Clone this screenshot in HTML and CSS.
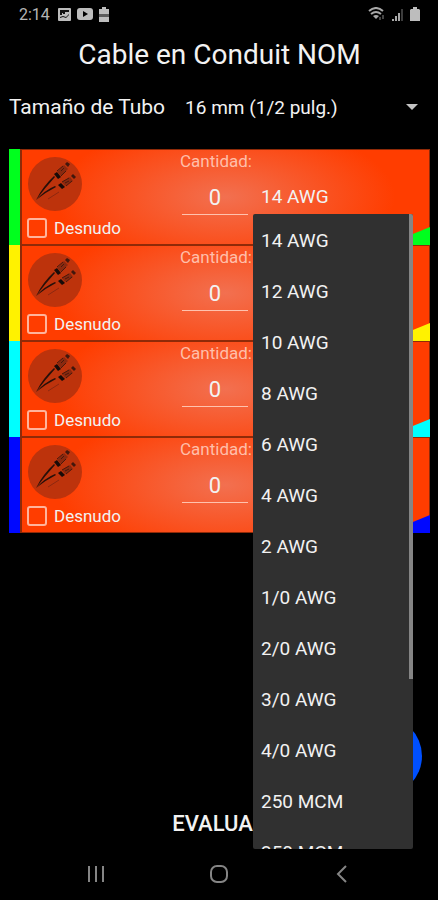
FILE: index.html
```
<!DOCTYPE html>
<html lang="es">
<head>
  <meta charset="UTF-8">
  <meta name="viewport" content="width=device-width, initial-scale=1.0">
  <title>Cable en Conduit NOM</title>
  <link rel="stylesheet" href="styles.css">
</head>
<body>
  <svg class="symbols" aria-hidden="true">
    <symbol id="cable" viewBox="0 0 54 54">
      <circle cx="27" cy="27" r="27" fill="#bd330c"/>
      <path d="M8 43 Q15 29 26 19 L27 20 Q17 31 8 43Z" fill="#28100a"/>
      <path d="M8 43 Q17 33 27 29 L28 30 Q18 35 8 43Z" fill="#28100a"/>
      <path d="M20 42 L31 35" stroke="#8d2810" stroke-width="1"/>
      <path d="M26 17 L29 15 L33 20 L30 22Z" fill="#180b08"/>
      <path d="M29 15 L36 8 L40 12 L33 19Z" fill="#8a290f"/>
      <path d="M29 14 L35 9 M33 19 L38 14 M33 14 L36 11" stroke="#48190c" stroke-width="1"/>
      <path d="M37 7 L39 5 L42 7 L40 10Z" fill="#42170c"/>
      <path d="M30 28 L33 26 L37 30 L34 32Z" fill="#180b08"/>
      <path d="M34 25 L42 20 L45 24 L37 29Z" fill="#8a290f"/>
      <path d="M34 25 L41 21 M38 29 L44 24 M37 26 L41 24" stroke="#48190c" stroke-width="1"/>
      <path d="M43 19 L45 17 L48 20 L46 22Z" fill="#42170c"/>
    </symbol>
  </svg>

  <div class="status-bar">
    <span class="clock">2:14</span>
    <svg width="13" height="13" viewBox="0 0 13 13"><rect width="13" height="13" rx="1" fill="#bdbdbd"/><path d="M2 2h9v2H7v2H5V5H4v2H2zM2 9l3-1 3 1 3-3v1L8 10 5 9l-3 1z" fill="#111"/></svg>
    <svg width="16" height="12" viewBox="0 0 16 12"><rect width="16" height="12" rx="3" fill="#bdbdbd"/><path d="M6 3l5 3-5 3z" fill="#000"/></svg>
    <svg width="10" height="15" viewBox="0 0 10 15"><path d="M3 0h4v2h3v13H0V2h3z" fill="#bdbdbd"/><path d="M0 7h10v3H0z" fill="#5c5c5c"/></svg>
    <span class="spacer"></span>
    <svg width="18" height="14" viewBox="0 0 18 14"><g fill="none" stroke="#a8a8a8" stroke-width="2"><path d="M1 4q7-6 14 0M3 7q5-4 10 0"/></g><path d="M5 9q3-2 6 0l-3 3z" fill="#a8a8a8"/><path d="M12 10v3M15 8v4" stroke="#444" stroke-width="2"/></svg>
    <svg width="12" height="13" viewBox="0 0 12 13"><path d="M1 11v2M4 8v5M7 5v8" stroke="#a8a8a8" stroke-width="2"/><path d="M10 1v12" stroke="#3c3c3c" stroke-width="2"/></svg>
    <svg width="10" height="14" viewBox="0 0 10 14"><path d="M3 0h4v2h2l1 1v11H0V3l1-1h2z" fill="#bdbdbd"/></svg>
  </div>

  <main>
    <h1>Cable en Conduit NOM</h1>

    <div class="tube">
      <label for="tube">Tamaño de Tubo</label>
      <select id="tube">
        <option>16 mm (1/2 pulg.)</option>
      </select>
      <span class="arrow"></span>
    </div>

    <div class="cables">
      <section class="cable green">
        <div class="kind">
          <svg class="photo" aria-hidden="true"><use href="#cable"/></svg>
          <label class="bare"><input type="checkbox"> Desnudo</label>
        </div>
        <div class="amount">
          <label for="amount1">Cantidad:</label>
          <input type="text" id="amount1" value="0">
        </div>
        <div class="gauge">
          <select aria-label="Calibre">
            <option>14 AWG</option>
          </select>
          <div class="menu">
            <ul role="listbox" aria-label="Calibre">
              <li role="option" aria-selected="true">14 AWG</li>
              <li role="option">12 AWG</li>
              <li role="option">10 AWG</li>
              <li role="option">8 AWG</li>
              <li role="option">6 AWG</li>
              <li role="option">4 AWG</li>
              <li role="option">2 AWG</li>
              <li role="option">1/0 AWG</li>
              <li role="option">2/0 AWG</li>
              <li role="option">3/0 AWG</li>
              <li role="option">4/0 AWG</li>
              <li role="option">250 MCM</li>
              <li role="option">350 MCM</li>
            </ul>
            <span class="thumb"></span>
          </div>
        </div>
      </section>

      <section class="cable yellow">
        <div class="kind">
          <svg class="photo" aria-hidden="true"><use href="#cable"/></svg>
          <label class="bare"><input type="checkbox"> Desnudo</label>
        </div>
        <div class="amount">
          <label for="amount2">Cantidad:</label>
          <input type="text" id="amount2" value="0">
        </div>
      </section>

      <section class="cable cyan">
        <div class="kind">
          <svg class="photo" aria-hidden="true"><use href="#cable"/></svg>
          <label class="bare"><input type="checkbox"> Desnudo</label>
        </div>
        <div class="amount">
          <label for="amount3">Cantidad:</label>
          <input type="text" id="amount3" value="0">
        </div>
      </section>

      <section class="cable blue">
        <div class="kind">
          <svg class="photo" aria-hidden="true"><use href="#cable"/></svg>
          <label class="bare"><input type="checkbox"> Desnudo</label>
        </div>
        <div class="amount">
          <label for="amount4">Cantidad:</label>
          <input type="text" id="amount4" value="0">
        </div>
      </section>
    </div>

    <div class="actions">
      <button class="add" aria-label="Agregar"></button>
      <button class="evaluate">EVALUAR</button>
    </div>
  </main>

  <nav class="nav-bar">
    <button aria-label="Recientes"><svg width="18" height="18" viewBox="0 0 18 18"><path d="M2 1v16M9 1v16M16 1v16" stroke="#858585" stroke-width="2"/></svg></button>
    <button aria-label="Inicio"><svg width="20" height="20" viewBox="0 0 20 20"><rect x="2" y="2" width="16" height="16" rx="6" fill="none" stroke="#858585" stroke-width="2"/></svg></button>
    <button aria-label="Atrás"><svg width="18" height="18" viewBox="0 0 18 18"><path d="M13 1L5 9l8 8" fill="none" stroke="#858585" stroke-width="2"/></svg></button>
  </nav>
</body>
</html>
```
FILE: styles.css
```
* {
  box-sizing: border-box;
}
body {
  margin: 0;
  min-height: 100vh;
  display: flex;
  flex-direction: column;
  background: #000;
  color: #f2f2f2;
  font-family: Roboto, sans-serif;
}
button, input, select {
  font-family: inherit;
  color: inherit;
  margin: 0;
  padding: 0;
  border: none;
  border-radius: 0;
  background: none;
  appearance: none;
}
.symbols {
  display: none;
}
.status-bar {
  display: flex;
  align-items: center;
  gap: 6px;
  height: 28px;
  padding: 0 18px 0 19px;
}
.clock {
  font-size: 16px;
  color: #b5b5b5;
  margin-right: 2px;
}
.spacer {
  flex: 1;
}
main {
  flex: 1;
  display: flex;
  flex-direction: column;
  padding: 0 8px 0 9px;
}
h1 {
  margin: 0;
  font-size: 28px;
  font-weight: 400;
  line-height: 54px;
  text-align: center;
}
.tube {
  display: flex;
  align-items: center;
  height: 50px;
  margin-bottom: 17px;
  padding-right: 12px;
}
.tube label {
  font-size: 21px;
  margin-right: 20px;
}
.tube select {
  flex: 1;
  font-size: 19px;
}
.arrow {
  border: 6px solid transparent;
  border-top-color: #c4c4c4;
  border-bottom: none;
}
.cable {
  position: relative;
  display: flex;
  height: 96px;
  border-left: 11px solid;
  background: radial-gradient(170px 75px at 50% 50%, #f27050, #ff3d00);
  box-shadow: inset 2px 1px #8f2a08, inset -1px -1px #8f2a08;
}
.cable::after {
  content: "";
  position: absolute;
  right: 0;
  bottom: 0;
  width: 44px;
  height: 18px;
  background: var(--color);
  clip-path: polygon(0 100%, 100% 0, 100% 100%);
}
.green {
  --color: #00ff1e;
  border-color: var(--color);
}
.yellow {
  --color: #fff200;
  border-color: var(--color);
}
.cyan {
  --color: #00ffff;
  border-color: var(--color);
}
.blue {
  --color: #0008ff;
  border-color: var(--color);
}
.kind {
  width: 160px;
  padding: 8px 0 0 7px;
}
.photo {
  display: block;
  width: 54px;
  height: 54px;
  margin-left: 1px;
}
.bare {
  display: flex;
  align-items: center;
  gap: 7px;
  height: 34px;
  font-size: 17px;
}
.bare input {
  width: 20px;
  height: 20px;
  border: 2px solid #ffb49c;
  border-radius: 3px;
}
.amount {
  display: flex;
  flex-direction: column;
  width: 72px;
  padding-top: 2px;
}
.amount label {
  font-size: 17px;
  line-height: 20px;
  color: #ffbfaa;
}
.amount input {
  width: 66px;
  height: 44px;
  margin-left: 2px;
  padding-top: 10px;
  border-bottom: 1px solid #ffc2ae;
  font-size: 22px;
  text-align: center;
}
.gauge {
  position: relative;
  flex: 1;
  padding-top: 30px;
}
.gauge select {
  width: 100%;
  height: 34px;
  padding-left: 9px;
  font-size: 19px;
}
.menu {
  position: absolute;
  z-index: 1;
  top: 65px;
  left: 1px;
  width: 160px;
  height: 635px;
  overflow: hidden;
  border-radius: 2px;
  background: #303030;
}
.menu ul {
  list-style: none;
  margin: 0;
  padding: 1px 0 0;
}
.menu li {
  padding-left: 8px;
  font-size: 19px;
  line-height: 51px;
}
.thumb {
  position: absolute;
  top: 0;
  right: 0;
  width: 4px;
  height: 465px;
  background: #858585;
}
.actions {
  flex: 1;
  display: flex;
  flex-direction: column;
  justify-content: flex-end;
  align-items: center;
}
.add {
  align-self: flex-end;
  width: 80px;
  height: 80px;
  margin-right: 8px;
  border-radius: 50%;
  background: #0050ff;
}
.evaluate {
  height: 54px;
  font-size: 22px;
  font-weight: 500;
}
.nav-bar {
  display: flex;
  justify-content: center;
  height: 50px;
}
.nav-bar button {
  width: 28%;
}
```
